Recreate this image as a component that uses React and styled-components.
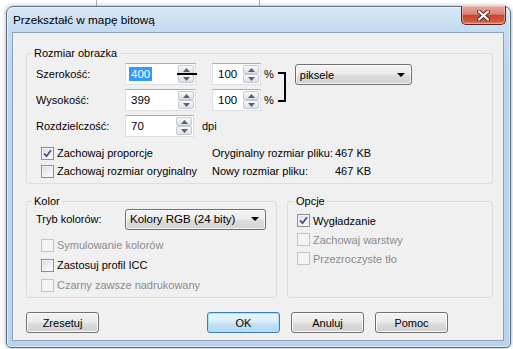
import React from 'react'
import styled, { createGlobalStyle, css } from 'styled-components'

const GlobalStyle = createGlobalStyle`
    html, body {
        margin: 0;
        padding: 0;
        background: #fff;
    }
    body {
        font-family: "Liberation Sans", Arial, sans-serif;
        font-size: 11px;
        color: #000;
    }
    * {
        box-sizing: border-box;
    }
`

const Screen = styled.div`
    width: 513px;
    height: 349px;
    overflow: hidden;
    background: #fff;
    display: flex;
    flex-direction: column;
`

const Backdrop = styled.div`
    height: 6px;
    display: flex;
    flex-shrink: 0;
`

const BackdropCell = styled.div`
    width: ${p => p.$w}px;
    border-right: 1px solid #b4b4b4;
`

const Window = styled.div`
    margin-left: 6px;
    width: 505px;
    height: 342px;
    flex-shrink: 0;
    position: relative;
    display: flex;
    flex-direction: column;
    border: 1px solid #5d6e81;
    border-radius: 7px 7px 5px 5px;
    background: linear-gradient(180deg, #d9e8f7 0px, #c6dcf2 20px, #bcd5ef 60px, #b9d2ed 100%);
    box-shadow: 0 0 4px rgba(0, 0, 0, 0.35), inset 0 0 0 1px rgba(255, 255, 255, 0.55);
`

const TitleBar = styled.div`
    height: 25px;
    flex-shrink: 0;
    display: flex;
    align-items: center;
    padding-left: 6px;
    font-size: 11.75px;
    color: #000;
`

const CloseButton = styled.div`
    position: absolute;
    top: -1px;
    right: 4px;
    width: 45px;
    height: 19px;
    display: flex;
    align-items: center;
    justify-content: center;
    border: 1px solid #5a2520;
    border-top: none;
    border-radius: 0 0 5px 5px;
    background: linear-gradient(180deg, #e7a89e 0%, #d98476 45%, #c8442f 52%, #d45a3e 85%, #e28b6c 100%);
    box-shadow: inset 0 0 0 1px rgba(255, 220, 210, 0.45);
`

const Client = styled.div`
    flex: 1;
    margin: 0 6px 6px 5px;
    background: #f0f0f0;
    border: 1px solid #8ea3bb;
    padding: 13px 10px 0 13px;
    display: flex;
    flex-direction: column;
`

const Group = styled.fieldset`
    margin: 0;
    min-width: 0;
    border: 1px solid #d5dfe5;
    border-radius: 3px;
    padding: ${p => p.$pad};
    ${p => p.$w && css`width: ${p.$w}px;`}
    display: flex;
    flex-direction: column;
`

const Legend = styled.legend`
    padding: 0 2px;
    margin-left: ${p => p.$ml}px;
    line-height: 14px;
    font-size: 11px;
`

const DimBlock = styled.div`
    display: flex;
    align-items: flex-start;
`

const DimRows = styled.div`
    display: flex;
    flex-direction: column;
`

const FieldRow = styled.div`
    height: ${p => p.$h || 26}px;
    display: flex;
    align-items: center;
`

const Label = styled.div`
    width: 89px;
    flex-shrink: 0;
`

const SpinBox = styled.div`
    position: relative;
    width: ${p => p.$w}px;
    height: 22px;
    margin-left: ${p => p.$ml || 0}px;
    display: flex;
    padding: 1px;
    background: #fff;
    border: 1px solid #dbdfe6;
    border-top-color: #abadb3;
`

const SpinValue = styled.div`
    flex: 1;
    display: flex;
    align-items: center;
    padding-left: ${p => (p.$sel ? 2 : 4)}px;
    font-size: 11.5px;
`

const Selection = styled.span`
    background: #3399ff;
    color: #fff;
    padding: 0 2px;
    line-height: 14px;
`

const SpinButtons = styled.div`
    width: 16px;
    display: flex;
    flex-direction: column;
`

const SpinButton = styled.div`
    flex: 1;
    display: flex;
    align-items: center;
    justify-content: center;
    border: 1px solid #c3c8d1;
    border-radius: 2px;
    background: linear-gradient(180deg, #fafafa 0%, #ececec 50%, #dfdfe2 100%);
`

const StrikeLine = styled.div`
    position: absolute;
    right: -2px;
    top: 9px;
    width: 20px;
    height: 2px;
    background: #000;
`

const Unit = styled.span`
    margin-left: ${p => p.$ml || 3}px;
`

const LinkBracket = styled.div`
    width: 8px;
    height: 30px;
    margin: 11px 0 0 4px;
    border: 2px solid #000;
    border-left: none;
`

const Select = styled.div`
    width: ${p => p.$w}px;
    height: 21px;
    margin: ${p => p.$m || 0};
    display: flex;
    align-items: center;
    justify-content: space-between;
    padding: 0 6px 0 4px;
    border: 1px solid #707070;
    border-radius: 3px;
    background: linear-gradient(180deg, #f4f4f4 0%, #ececec 48%, #dedede 52%, #d2d2d2 100%);
    box-shadow: inset 0 0 0 1px rgba(255, 255, 255, 0.7);
    font-size: ${p => p.$fs || 11}px;
`

const CheckRow = styled.div`
    height: ${p => p.$h}px;
    display: flex;
    align-items: center;
    padding-left: ${p => p.$pl || 0}px;
`

const CheckItem = styled.div`
    display: flex;
    align-items: center;
    ${p => p.$w && css`width: ${p.$w}px;`}
    color: ${p => (p.$disabled ? '#8c8c8c' : '#000')};
`

const Box = styled.div`
    width: 13px;
    height: 13px;
    margin-right: 3px;
    flex-shrink: 0;
    display: flex;
    align-items: center;
    justify-content: center;
    border: 1px solid ${p => (p.$disabled ? '#c4c4c4' : '#8e8f8f')};
    background: ${p => (p.$disabled
        ? '#f4f4f4'
        : 'linear-gradient(135deg, #d8dbe0 0%, #eceef0 50%, #fafafa 100%)')};
    box-shadow: inset 0 0 0 1px ${p => (p.$disabled ? '#f4f4f4' : '#f4f4f4')};
`

const InfoLabel = styled.div`
    width: 123px;
    flex-shrink: 0;
`

const BottomGroups = styled.div`
    display: flex;
    gap: 10px;
    margin-top: 10px;
`

const ButtonRow = styled.div`
    display: flex;
    align-items: center;
    margin-top: 14px;
`

const Button = styled.div`
    width: 73px;
    height: 21px;
    margin-left: ${p => p.$ml || 0}px;
    display: flex;
    align-items: center;
    justify-content: center;
    border: 1px solid ${p => (p.$primary ? '#3c7fb1' : '#707070')};
    border-radius: 3px;
    background: ${p => (p.$primary
        ? 'linear-gradient(180deg, #eaf6fd 0%, #d9eefb 48%, #c4e3f7 52%, #b2d9f2 100%)'
        : 'linear-gradient(180deg, #f2f2f2 0%, #ebebeb 48%, #dddddd 52%, #cfcfcf 100%)')};
    box-shadow: inset 0 0 0 1px ${p => (p.$primary ? '#a9dff7' : '#fcfcfc')};
    font-size: 11px;
`

const Arrow = ({ up }) => (
    <svg width="7" height="4" viewBox="0 0 7 4">
        <polygon points={up ? '0,4 7,4 3.5,0' : '0,0 7,0 3.5,4'} fill="#4d6185" />
    </svg>
)

const DropArrow = () => (
    <svg width="8" height="4" viewBox="0 0 8 4">
        <polygon points="0,0 8,0 4,4" fill="#000" />
    </svg>
)

const CheckMark = () => (
    <svg width="9" height="9" viewBox="0 0 9 9">
        <path d="M1 4.5 L3.5 7.2 L8 1.2" fill="none" stroke="#3d5186" strokeWidth="1.8" />
    </svg>
)

const Spin = ({ w, ml, value, selected, strike }) => (
    <SpinBox $w={w} $ml={ml}>
        <SpinValue $sel={selected}>
            {selected ? <Selection>{value}</Selection> : value}
        </SpinValue>
        <SpinButtons>
            <SpinButton><Arrow up /></SpinButton>
            <SpinButton><Arrow /></SpinButton>
        </SpinButtons>
        {strike && <StrikeLine />}
    </SpinBox>
)

const Check = ({ label, checked, disabled, w }) => (
    <CheckItem $w={w} $disabled={disabled}>
        <Box $disabled={disabled}>{checked && <CheckMark />}</Box>
        {label}
    </CheckItem>
)

const App = () => {
    return (
        <Screen>
            <GlobalStyle />
            <Backdrop>
                <BackdropCell $w={97} />
                <BackdropCell $w={163} />
            </Backdrop>
            <Window>
                <TitleBar>Przekształć w mapę bitową</TitleBar>
                <CloseButton>
                    <svg width="13" height="11" viewBox="0 0 13 11">
                        <path d="M2 1.5 L11 9.5 M11 1.5 L2 9.5" stroke="#4a2a28" strokeWidth="4" strokeLinecap="round" />
                        <path d="M2 1.5 L11 9.5 M11 1.5 L2 9.5" stroke="#fff" strokeWidth="2.2" strokeLinecap="round" />
                    </svg>
                </CloseButton>
                <Client>
                    <Group $pad="1px 0 3px 9px">
                        <Legend $ml={-4}>Rozmiar obrazka</Legend>
                        <DimBlock>
                            <DimRows>
                                <FieldRow>
                                    <Label>Szerokość:</Label>
                                    <Spin w={71} value="400" selected strike />
                                    <Spin w={49} ml={16} value="100" />
                                    <Unit>%</Unit>
                                </FieldRow>
                                <FieldRow>
                                    <Label>Wysokość:</Label>
                                    <Spin w={71} value="399" />
                                    <Spin w={49} ml={16} value="100" />
                                    <Unit>%</Unit>
                                </FieldRow>
                            </DimRows>
                            <LinkBracket />
                            <Select $w={117} $m="3px 0 0 9px">
                                piksele
                                <DropArrow />
                            </Select>
                        </DimBlock>
                        <FieldRow>
                            <Label>Rozdzielczość:</Label>
                            <Spin w={69} value="70" />
                            <Unit $ml={8}>dpi</Unit>
                        </FieldRow>
                        <CheckRow $h={18} $pl={5} style={{ marginTop: 5 }}>
                            <Check w={171} label="Zachowaj proporcje" checked />
                            <InfoLabel>Oryginalny rozmiar pliku:</InfoLabel>
                            <span>467 KB</span>
                        </CheckRow>
                        <CheckRow $h={18} $pl={5}>
                            <Check w={171} label="Zachowaj rozmiar oryginalny" />
                            <InfoLabel>Nowy rozmiar pliku:</InfoLabel>
                            <span>467 KB</span>
                        </CheckRow>
                    </Group>
                    <BottomGroups>
                        <Group $w={251} $pad="0 0 2px 9px">
                            <Legend $ml={-4}>Kolor</Legend>
                            <FieldRow $h={22}>
                                <Label>Tryb kolorów:</Label>
                                <Select $w={141} $fs={11.5}>
                                    Kolory RGB (24 bity)
                                    <DropArrow />
                                </Select>
                            </FieldRow>
                            <CheckRow $h={20} $pl={5} style={{ marginTop: 5 }}>
                                <Check label="Symulowanie kolorów" disabled />
                            </CheckRow>
                            <CheckRow $h={20} $pl={5}>
                                <Check label="Zastosuj profil ICC" />
                            </CheckRow>
                            <CheckRow $h={20} $pl={5}>
                                <Check label="Czarny zawsze nadrukowany" disabled />
                            </CheckRow>
                        </Group>
                        <Group $w={206} $pad="3px 0 2px 9px">
                            <Legend $ml={-3}>Opcje</Legend>
                            <CheckRow $h={19}>
                                <Check label="Wygładzanie" checked />
                            </CheckRow>
                            <CheckRow $h={19}>
                                <Check label="Zachowaj warstwy" disabled />
                            </CheckRow>
                            <CheckRow $h={19}>
                                <Check label="Przezroczyste tło" disabled />
                            </CheckRow>
                        </Group>
                    </BottomGroups>
                    <ButtonRow>
                        <Button>Zresetuj</Button>
                        <Button $primary $ml={108}>OK</Button>
                        <Button $ml={11}>Anuluj</Button>
                        <Button $ml={11}>Pomoc</Button>
                    </ButtonRow>
                </Client>
            </Window>
        </Screen>
    )
}

export default App
